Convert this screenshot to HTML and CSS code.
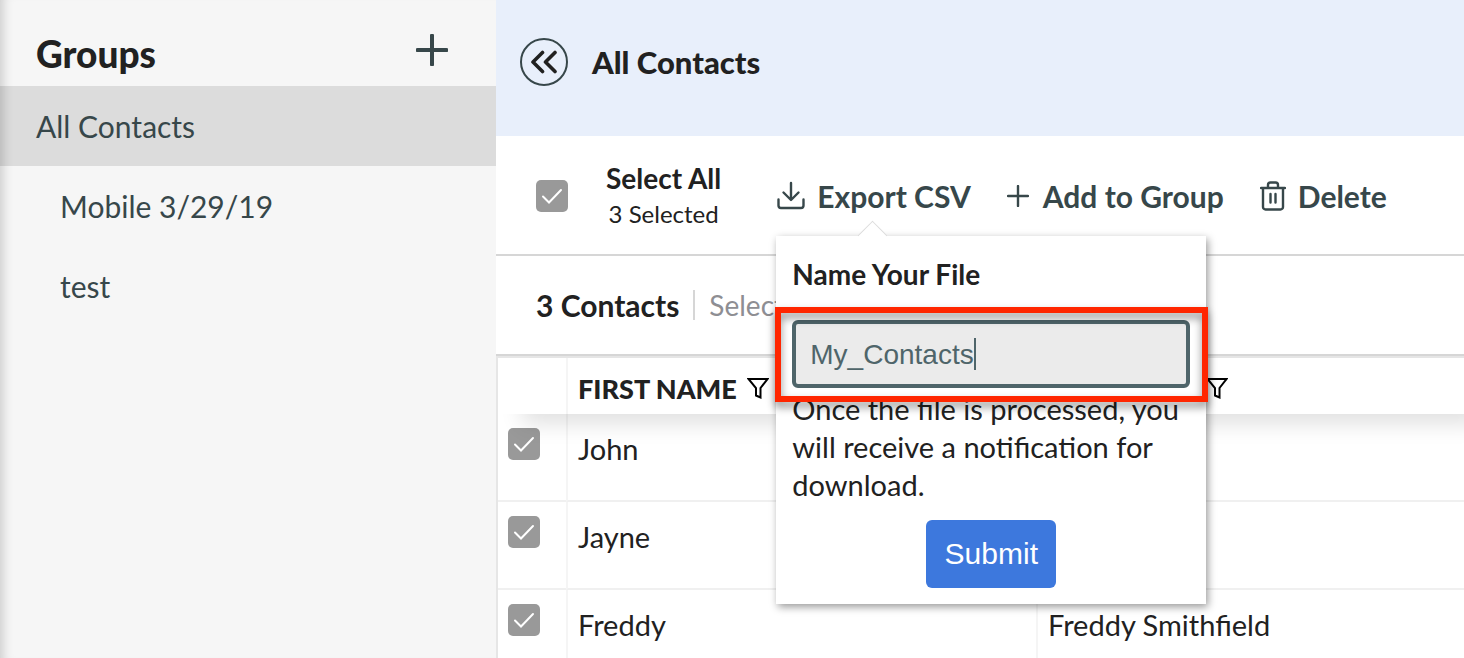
FILE: index.html
```
<!DOCTYPE html>
<html lang="en">
<head>
    <meta charset="utf-8">
    <title>Contacts</title>
    <link rel="stylesheet" href="styles.css">
</head>
<body>

    <div class="sidebar">
        <div class="sidebar-header">
            <h1>Groups</h1>
            <button type="button" class="icon-button" aria-label="Add group">
                <svg width="32" height="32" viewBox="0 0 32 32"><path d="M16 1.500v29M1.500 16h29" stroke-width="4"/></svg>
            </button>
        </div>
        <nav class="group-list">
            <a href="#" class="active">All Contacts</a>
            <a href="#" class="sub">Mobile 3/29/19</a>
            <a href="#" class="sub">test</a>
        </nav>
    </div>

    <div class="main">
        <div class="page-header">
            <button type="button" class="back-button" aria-label="Collapse groups">
                <svg width="28" height="24" viewBox="0 0 28 24"><path d="M12.500 2.500L3 12L12.500 21.500M25 2.500L15.500 12L25 21.500" stroke-width="3.600"/></svg>
            </button>
            <h2>All Contacts</h2>
        </div>

        <div class="toolbar">
            <input type="checkbox" id="selectAll" checked>
            <label class="select-all" for="selectAll">
                <strong>Select All</strong>
                <span>3 Selected</span>
            </label>

            <div class="export">
                <button type="button" class="action">
                    <svg width="28" height="30" viewBox="0 0 28 30"><path d="M14 2v16.500M6.500 11.500L14 19l7.500-7.500M1.500 18.500v6a2.500 2.500 0 0 0 2.500 2.500h20a2.500 2.500 0 0 0 2.500-2.500v-6" stroke-width="2.400"/></svg>
                    Export CSV
                </button>

                <form class="popover">
                    <label class="popover-title" for="fileName">Name Your File</label>
                    <div class="field">
                        <input type="text" id="fileName" name="fileName" value="My_Contacts">
                        <span class="caret"></span>
                    </div>
                    <p>Once the file is processed, you will receive a notification for download.</p>
                    <button type="submit">Submit</button>
                </form>
            </div>

            <button type="button" class="action add">
                <svg width="22" height="22" viewBox="0 0 22 22"><path d="M11 1v20M1 11h20" stroke-width="2.400"/></svg>
                Add to Group
            </button>

            <button type="button" class="action">
                <svg width="26" height="30" viewBox="0 0 26 30"><path d="M1 7h24M3 7v19a2.500 2.500 0 0 0 2.500 2.500h15a2.500 2.500 0 0 0 2.500-2.500V7M8 6.500V4a2.500 2.500 0 0 1 2.500-2.500h5A2.500 2.500 0 0 1 18 4v2.500M10.500 13v8.500M15.500 13v8.500" stroke-width="2.400"/></svg>
                Delete
            </button>
        </div>

        <div class="summary">
            <strong>3 Contacts</strong>
            <a href="#">Select</a>
        </div>

        <table class="contacts">
            <thead>
                <tr>
                    <th class="check"></th>
                    <th class="first">
                        <div>FIRST NAME <svg width="22" height="22" viewBox="0 0 22 22"><path d="M1.500 2h19L13.500 11v9.500L9 18.500V11z" stroke-width="2"/></svg></div>
                    </th>
                    <th class="full" aria-label="Full name">
                        <div><svg width="22" height="22" viewBox="0 0 22 22"><path d="M1.500 2h19L13.500 11v9.500L9 18.500V11z" stroke-width="2"/></svg></div>
                    </th>
                </tr>
            </thead>
            <tbody>
                <tr>
                    <td class="check"><input type="checkbox" aria-label="John" checked></td>
                    <td>John</td>
                    <td></td>
                </tr>
                <tr>
                    <td class="check"><input type="checkbox" aria-label="Jayne" checked></td>
                    <td>Jayne</td>
                    <td></td>
                </tr>
                <tr>
                    <td class="check"><input type="checkbox" aria-label="Freddy" checked></td>
                    <td>Freddy</td>
                    <td>Freddy Smithfield</td>
                </tr>
            </tbody>
        </table>
    </div>

</body>
</html>
```
FILE: styles.css
```
* {
    box-sizing: border-box;
}

body {
    font-family: Lato, sans-serif;
    font-size: 28px;
    color: #212121;
    background-color: #fff;
    margin: 0;
    display: flex;
    height: 100vh;
    overflow: hidden;
}

h1, h2, p {
    margin: 0;
}

a {
    text-decoration: none;
}

button {
    font: inherit;
    background: none;
    border: none;
    padding: 0;
    cursor: pointer;
}

svg {
    display: block;
    flex: none;
    fill: none;
    stroke: #37474a;
    stroke-linecap: round;
    stroke-linejoin: round;
}

input[type="checkbox"] {
    appearance: none;
    display: block;
    flex: none;
    width: 32px;
    height: 32px;
    margin: 0;
    border-radius: 5px;
    background: #999 url("data:image/svg+xml,%3Csvg xmlns='http://www.w3.org/2000/svg' viewBox='0 0 32 32'%3E%3Cpath d='M7 16.500l6 6L25 10' fill='none' stroke='white' stroke-width='2' stroke-linecap='round'/%3E%3C/svg%3E");
}

/* Sidebar */
.sidebar {
    flex: 0 0 496px;
    background-color: #f6f6f6;
    box-shadow: inset 12px 0 12px -10px rgba(0, 0, 0, 0.2);
}

.sidebar-header {
    display: flex;
    justify-content: space-between;
    padding: 32px 48px 10px 36px;
}

.sidebar-header h1 {
    font-size: 37px;
    font-weight: 900;
    line-height: 44px;
}

.icon-button {
    height: 36px;
}

.group-list a {
    display: block;
    padding: 0 36px;
    font-size: 30px;
    line-height: 80px;
    color: #37474a;
}

.group-list a.active {
    background-color: rgba(0, 0, 0, 0.106);
}

.group-list a.sub {
    padding-left: 60px;
}

/* Main area */
.main {
    flex: 1;
    min-width: 0;
    overflow: hidden;
}

.page-header {
    display: flex;
    align-items: center;
    gap: 24px;
    padding: 38px 24px 50px;
    background-color: #e8effb;
}

.page-header h2 {
    font-size: 31px;
    font-weight: 900;
    line-height: 48px;
}

.back-button {
    display: flex;
    align-items: center;
    justify-content: center;
    width: 48px;
    height: 48px;
    border: 2px solid #37474a;
    border-radius: 50%;
}

.back-button svg {
    stroke: #212121;
}

.toolbar {
    display: flex;
    align-items: center;
    gap: 36px;
    height: 120px;
    padding: 2px 40px 0;
    border-bottom: 2px solid #d6d6d6;
    white-space: nowrap;
}

.select-all {
    display: flex;
    flex-direction: column;
    align-items: center;
    line-height: 36px;
    margin: 0 20px 0 2px;
}

.select-all span {
    font-size: 24px;
}

.action {
    display: flex;
    align-items: center;
    gap: 12px;
    font-size: 30px;
    font-weight: bold;
    line-height: 36px;
    color: #37474a;
}

.action.add {
    gap: 14px;
}

.summary {
    display: flex;
    align-items: center;
    height: 100px;
    padding: 0 40px;
    border-bottom: 2px solid #d6d6d6;
    line-height: 30px;
}

.summary strong {
    padding-right: 14px;
    border-right: 2px solid #d6d6d6;
    font-size: 30px;
}

.summary a {
    padding-left: 14px;
    color: #8e8e93;
}

/* Contacts table */
.contacts {
    width: 100%;
    table-layout: fixed;
    border-collapse: separate;
    border-spacing: 0;
    border-top: 2px solid #e6e6e6;
    border-left: 2px solid #e6e6e6;
}

.contacts thead {
    position: relative;
    box-shadow: 20px 14px 22px -4px rgba(0, 0, 0, 0.12);
}

.contacts th {
    height: 56px;
    padding: 0 10px;
    background-color: #fff;
    text-align: left;
    font-size: 27px;
    font-weight: 900;
}

.contacts th div {
    display: flex;
    align-items: center;
    gap: 10px;
    padding-top: 4px;
}

.contacts th.full {
    padding-left: 168px;
}

.contacts th svg {
    stroke: #000;
    stroke-linejoin: miter;
}

.contacts td {
    height: 88px;
    padding: 16px 10px;
    border-bottom: 2px solid #f0f0f0;
    vertical-align: top;
    font-size: 29px;
    line-height: 38px;
}

.contacts th + th,
.contacts td + td {
    border-left: 2px solid #f5f5f5;
}

.contacts .check {
    width: 68px;
}

.contacts td.check {
    padding-top: 14px;
}

.contacts .first {
    width: 470px;
}

/* Export popover */
.export {
    position: relative;
}

.popover {
    position: absolute;
    top: 58px;
    left: -1px;
    z-index: 2;
    width: 430px;
    padding: 18px 16px 16px;
    background-color: #fff;
    box-shadow: 2px 3px 8px rgba(0, 0, 0, 0.4);
    white-space: normal;
}

.popover::before {
    content: "";
    position: absolute;
    top: -11px;
    left: 86px;
    width: 20px;
    height: 20px;
    background-color: #fff;
    border: solid #dcdcdc;
    border-width: 1px 0 0 1px;
    transform: rotate(45deg);
}

.popover-title {
    position: relative;
    display: block;
    margin-bottom: 26px;
    font-weight: bold;
    line-height: 40px;
}

.field {
    position: relative;
}

.field::after {
    content: "";
    position: absolute;
    inset: -13px -18px -14px -17px;
    border: 6px solid #ff2600;
    filter: drop-shadow(0 5px 4px rgba(0, 0, 0, 0.45));
    pointer-events: none;
}

.field input {
    display: block;
    width: 100%;
    height: 68px;
    padding: 2px 14px 0;
    border: 4px solid #4f656a;
    border-radius: 6px;
    outline: none;
    background-color: #ebebeb;
    font: 28px "Liberation Sans", Arial, sans-serif;
    color: #4f656a;
}

.caret {
    position: absolute;
    top: 18px;
    left: 182px;
    width: 2px;
    height: 32px;
    background-color: #4f656a;
}

.popover p {
    margin: 2px 0 16px;
    font-size: 29px;
    line-height: 38px;
}

.popover button {
    display: block;
    width: 130px;
    height: 68px;
    margin: 0 auto;
    border-radius: 6px;
    background-color: #3d78dd;
    font: 30px "Liberation Sans", Arial, sans-serif;
    color: #fff;
}
```
